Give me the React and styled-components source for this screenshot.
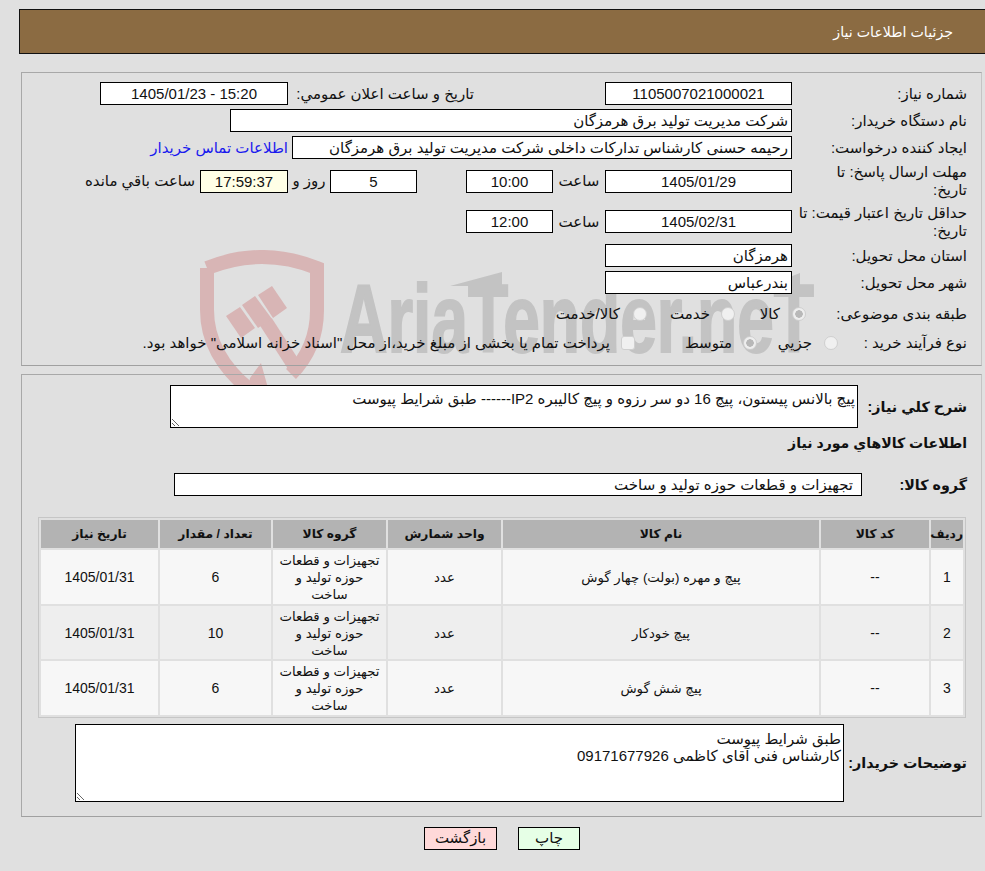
import React from 'react';
import styled, { createGlobalStyle } from 'styled-components';

const GlobalStyle = createGlobalStyle`
  html, body {
    margin: 0;
    background: #e0e0e0;
  }
  body {
    font-family: "Liberation Sans", "DejaVu Sans", sans-serif;
    font-size: 15px;
    color: #111;
    overflow: hidden;
  }
`;

const Page = styled.div`
  position: relative;
  width: 985px;
  height: 871px;
  direction: rtl;
  padding-top: 9px;
  box-sizing: border-box;
`;

const Watermark = styled.svg`
  position: absolute;
  left: 200px;
  top: 250px;
  z-index: 0;
`;

const Content = styled.div`
  position: relative;
  z-index: 1;
`;

const Header = styled.div`
  height: 45px;
  margin-left: 19px;
  padding-right: 32px;
  box-sizing: border-box;
  display: flex;
  align-items: center;
  background: #8b6b42;
  border: 1px solid #111;
  border-right: 0;
  color: #fff;
  font-size: 14.2px;
`;

const Panel = styled.div`
  margin: ${props => props.$top}px 3px 0 21px;
  padding: ${props => props.$pad};
  border: 1px solid #a8a8a8;
  border-right-color: #c4c4c4;
  border-bottom-color: #a0a0a0;
`;

const Row = styled.div`
  display: flex;
  align-items: center;
  height: ${props => props.$h}px;
  margin-top: ${props => props.$top || 0}px;
`;

const Label = styled.div`
  width: ${props => props.$w || 175}px;
  flex: none;
  box-sizing: border-box;
  padding-left: 5px;
  line-height: 18px;
  font-weight: ${props => props.$bold ? 'bold' : 'normal'};
  font-size: ${props => props.$bold ? '14.3px' : 'inherit'};
  white-space: ${props => props.$bold ? 'nowrap' : 'normal'};
`;

const Box = styled.div`
  width: ${props => props.$w}px;
  height: ${props => props.$h || 23}px;
  flex: none;
  box-sizing: border-box;
  padding: 0 ${props => props.$pad || 3}px;
  display: flex;
  align-items: center;
  justify-content: ${props => props.$center ? 'center' : 'flex-start'};
  background: ${props => props.$bg || '#fff'};
  border: 1px solid #000;
  white-space: nowrap;
`;

const Num = styled.span`
  font-size: 14px;
`;

const InlineText = styled.div`
  width: ${props => props.$w}px;
  flex: none;
  box-sizing: border-box;
  text-align: ${props => props.$align || 'right'};
  padding-right: ${props => props.$pad || 0}px;
  white-space: nowrap;
`;

const Spacer = styled.div`
  width: ${props => props.$w}px;
  flex: none;
`;

const ContactLink = styled.a`
  margin-right: 4px;
  color: #1a1aee;
  text-decoration: none;
  cursor: pointer;
  white-space: nowrap;
`;

const Radio = styled.span`
  width: 14px;
  height: 14px;
  flex: none;
  margin-left: ${props => props.$gap || 10}px;
  box-sizing: border-box;
  border-radius: ${props => props.$square ? '3px' : '50%'};
  border: 1px solid #cfcfcf;
  background: ${props => props.$on
    ? 'radial-gradient(circle, #b8b8b8 0 3.5px, #eee 4px)'
    : '#f0f0f0'};
`;

const Choice = styled.div`
  width: ${props => props.$w ? `${props.$w}px` : 'auto'};
  flex: none;
  display: flex;
  align-items: center;
  white-space: nowrap;
`;

const Textarea = styled.textarea`
  width: ${props => props.$w}px;
  height: ${props => props.$h}px;
  flex: none;
  box-sizing: border-box;
  margin: 0;
  padding: ${props => props.$padTop}px 2px 2px;
  border: 1px solid #000;
  border-radius: 0;
  outline: none;
  background: #fff;
  color: #111;
  font: 15px/17px "Liberation Sans", "DejaVu Sans", sans-serif;
`;

const Heading = styled.div`
  height: 30px;
  line-height: 30px;
  font-weight: bold;
  font-size: 14.1px;
`;

const GridTable = styled.table`
  width: 928px;
  margin: 21px 1px 6px 0;
  table-layout: fixed;
  border-collapse: separate;
  border-spacing: 2px;
  border: 1px solid #c6c6c6;
  background: #e0e0e0;
  font-size: 13.3px;
`;

const Th = styled.th`
  height: 28px;
  padding: 0;
  background: #b3b3b3;
  font-size: 12.3px;
  font-weight: bold;
  text-align: center;
`;

const Td = styled.td`
  height: 53.5px;
  padding: 2px 5px 0;
  box-sizing: border-box;
  background: ${props => props.$even ? '#eeeeee' : '#f7f7f7'};
  text-align: center;
  line-height: 17px;
`;

const Buttons = styled.div`
  display: flex;
  justify-content: center;
  gap: 21px;
  margin-top: 10px;
  padding-left: 19px;
`;

const Btn = styled.button`
  width: ${props => props.$w}px;
  height: 23px;
  padding: 0;
  background: ${props => props.$bg};
  border: 1px solid #000;
  border-radius: 0;
  color: #111;
  font: 15px "Liberation Sans", "DejaVu Sans", sans-serif;
`;

const items = [
  { id: 1, name: 'پیچ و مهره (بولت) چهار گوش', qty: 6 },
  { id: 2, name: 'پیچ خودکار', qty: 10 },
  { id: 3, name: 'پیچ شش گوش', qty: 6 },
];

const colWidths = [32, 108, 316, 113, 113, 111, 117];

const App = () => (
  <>
    <GlobalStyle />
    <Page>
      <Watermark width="620" height="180" viewBox="0 0 620 180">
        <g fill="none" stroke="#d8b5b5" strokeWidth="14">
          <path d="M7 18 Q62 -4 117 18 V60 Q117 98 91 124" />
          <path d="M7 18 V60 Q7 105 50 140" />
          <path d="M66 72 L97 120" />
        </g>
        <g fill="#d8b5b5">
          <polygon points="26,66 40,57 55,78 41,88" />
          <polygon points="42,55 55,46 72,69 58,78" />
          <polygon points="58,45 72,36 87,58 73,68" />
          <polygon points="50,128 61,113 68,138 48,140" />
        </g>
        <text
          x="140"
          y="102"
          fill="#c3c3c3"
          stroke="#c3c3c3"
          strokeWidth="2"
          fontFamily="Liberation Sans"
          fontWeight="bold"
          fontSize="96"
          textLength="474"
          lengthAdjust="spacingAndGlyphs"
          direction="ltr"
        >
          AriaTender.neT
        </text>
        <g fill="#c3c3c3">
          <polygon points="250,36 302,22 302,36" />
          <polygon points="567,36 600,23 600,36" />
        </g>
      </Watermark>
      <Content>
        <Header>جزئیات اطلاعات نیاز</Header>

        <Panel $top={18} $pad="7px 14px 10px 0">
          <Row $h={27}>
            <Label>شماره نیاز:</Label>
            <Box $w={187} $center>1105007021000021</Box>
            <InlineText $w={317} $pad={131}>تاریخ و ساعت اعلان عمومي:</InlineText>
            <Box $w={188} $center>15:20 - 1405/01/23</Box>
          </Row>
          <Row $h={27}>
            <Label>نام دستگاه خریدار:</Label>
            <Box $w={562}>شرکت مدیریت تولید برق هرمزگان</Box>
          </Row>
          <Row $h={27}>
            <Label>ایجاد کننده درخواست:</Label>
            <Box $w={500}>رحیمه حسنی کارشناس تدارکات داخلی شرکت مدیریت تولید برق هرمزگان</Box>
            <ContactLink>اطلاعات تماس خریدار</ContactLink>
          </Row>
          <Row $h={40}>
            <Label>مهلت ارسال پاسخ: تا<br />تاریخ:</Label>
            <Box $w={187} $center>1405/01/29</Box>
            <InlineText $w={52} $align="center">ساعت</InlineText>
            <Box $w={87} $center>10:00</Box>
            <Spacer $w={49} />
            <Box $w={87} $center>5</Box>
            <InlineText $w={42} $align="center">روز و</InlineText>
            <Box $w={88} $center $bg="#ffffe6">17:59:37</Box>
            <InlineText $w={117} $pad={5}>ساعت باقي مانده</InlineText>
          </Row>
          <Row $h={41}>
            <Label>حداقل تاریخ اعتبار قیمت: تا<br />تاریخ:</Label>
            <Box $w={187} $center>1405/02/31</Box>
            <InlineText $w={52} $align="center">ساعت</InlineText>
            <Box $w={87} $center>12:00</Box>
          </Row>
          <Row $h={27}>
            <Label>استان محل تحویل:</Label>
            <Box $w={187}>هرمزگان</Box>
          </Row>
          <Row $h={27}>
            <Label>شهر محل تحویل:</Label>
            <Box $w={187}>بندرعباس</Box>
          </Row>
          <Row $h={35}>
            <Label $w={161}>طبقه بندی موضوعی:</Label>
            <Choice $w={71}><Radio $on $gap={12} />کالا</Choice>
            <Choice $w={88}><Radio $gap={11} />خدمت</Choice>
            <Choice><Radio $gap={13} />کالا/خدمت</Choice>
          </Row>
          <Row $h={24}>
            <Label $w={129}>نوع فرآیند خرید :</Label>
            <Choice $w={81}><Radio $gap={12} />جزيي</Choice>
            <Choice $w={122}><Radio $on $gap={11} />متوسط</Choice>
            <Choice><Radio $square $gap={11} />پرداخت تمام یا بخشی از مبلغ خرید،از محل "اسناد خزانه اسلامی" خواهد بود.</Choice>
          </Row>
        </Panel>

        <Panel $top={8} $pad="10px 14px 14px 0">
          <Row $h={43}>
            <Label $w={109} $bold>شرح كلي نياز:</Label>
            <Textarea
              $w={688}
              $h={43}
              $padTop={4}
              readOnly
              defaultValue="پیچ بالانس پیستون، پیچ 16 دو سر رزوه و پیچ کالیبره IP2------ طبق شرایط پیوست"
            />
          </Row>
          <Heading>اطلاعات كالاهاي مورد نياز</Heading>
          <Row $h={23} $top={15}>
            <Label $w={105} $bold>گروه کالا:</Label>
            <Box $w={688} $pad={8}>تجهیزات و قطعات حوزه تولید و ساخت</Box>
          </Row>
          <GridTable>
            <colgroup>
              {colWidths.map((w, i) => <col key={i} width={w} />)}
            </colgroup>
            <thead>
              <tr>
                <Th>ردیف</Th>
                <Th>کد کالا</Th>
                <Th>نام کالا</Th>
                <Th>واحد شمارش</Th>
                <Th>گروه کالا</Th>
                <Th>تعداد / مقدار</Th>
                <Th>تاریخ نیاز</Th>
              </tr>
            </thead>
            <tbody>
              {items.map(item => {
                const even = item.id % 2 === 0;
                return (
                  <tr key={item.id}>
                    <Td $even={even}><Num>{item.id}</Num></Td>
                    <Td $even={even}><Num>--</Num></Td>
                    <Td $even={even}>{item.name}</Td>
                    <Td $even={even}>عدد</Td>
                    <Td $even={even}>تجهیزات و قطعات حوزه تولید و ساخت</Td>
                    <Td $even={even}><Num>{item.qty}</Num></Td>
                    <Td $even={even}><Num>1405/01/31</Num></Td>
                  </tr>
                );
              })}
            </tbody>
          </GridTable>
          <Row $h={78}>
            <Label $w={123} $bold>توضیحات خریدار:</Label>
            <Textarea
              $w={769}
              $h={78}
              $padTop={5}
              readOnly
              defaultValue={'طبق شرایط پیوست\nکارشناس فنی آقای کاظمی 09171677926'}
            />
          </Row>
        </Panel>

        <Buttons>
          <Btn $w={62} $bg="#e6ffe6">چاپ</Btn>
          <Btn $w={73} $bg="#ffd9d9">بازگشت</Btn>
        </Buttons>
      </Content>
    </Page>
  </>
);

export default App;
